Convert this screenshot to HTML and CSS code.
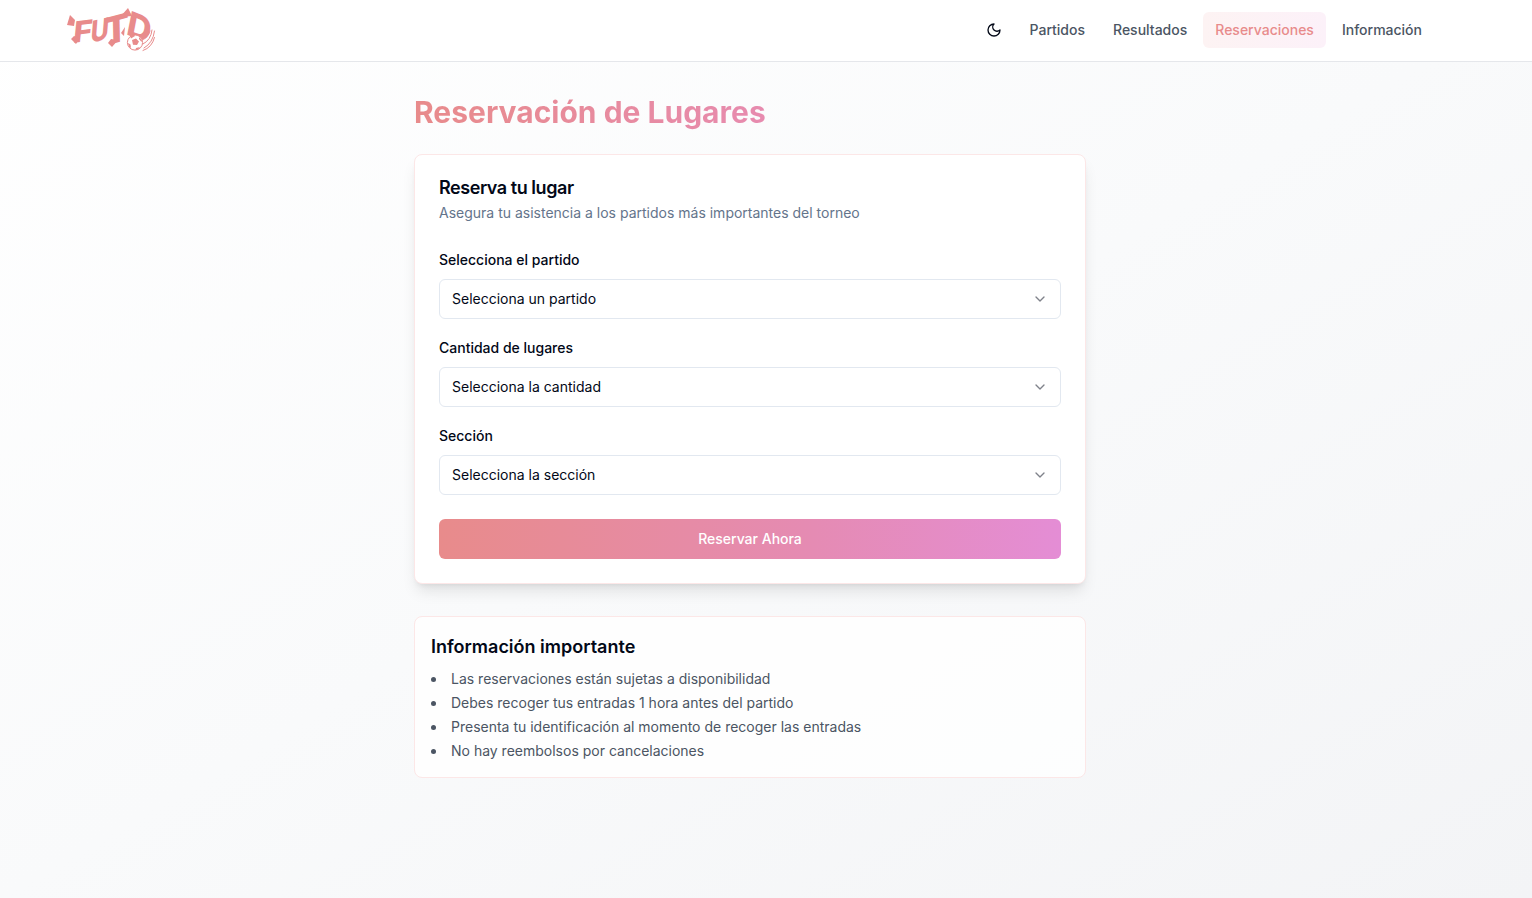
FILE: index.html
```html
<!DOCTYPE html>
<html lang="es">
<head>
<meta charset="utf-8">
<title>Reservación de Lugares</title>
<link rel="stylesheet" href="styles.css">
</head>
<body>
<header class="header">
  <div class="header-inner">
    <a class="brand" href="#" aria-label="FUTD">
      <svg class="logo" width="96" height="56" viewBox="62 2 96 56">
        <g class="logo-letters">
          <text transform="matrix(1.12 -.14 -.1 1.02 72.500 43)">F</text>
          <text transform="matrix(.86 -.2 -.08 1.04 90 43)">U</text>
          <text transform="matrix(1.3 -.34 .03 1.3 104 46)">T</text>
          <text transform="matrix(1.12 .44 -.22 1.12 125.500 34)">D</text>
        </g>
        <g class="brush">
          <path d="M67 25l3-10 5 5-1 6z"/>
          <path d="M71 39l3-3 6 2-4 6zM108 43l3-4 7 1-6 7z"/>
          <path d="M120 17l8-9 4 8zM124 36l-3-3 4-6z"/>
        </g>
        <g class="swoosh">
          <path d="M144 48q9-5 10.500-17M143 44q8-4 9-14M143 50.500q9-3 11.500-13M142 40q6-2 8-9"/>
        </g>
        <circle class="ball" cx="135" cy="42.500" r="7.600"/>
        <g class="brush">
          <path d="M132 40l4-1.500 3 3-2 3.500-4-.3zM130 36l4-1.500 1 1.500-4 2.500zM139 37l3 3-.5 2-2.500-3zM128 43l2.500 1.500.5 3.500-2-1zM136 48l4-1-2 2.500-2.500.5z"/>
        </g>
      </svg>
    </a>
    <nav class="nav">
      <button class="theme" aria-label="Tema">
        <svg class="icon" viewBox="0 0 24 24"><path d="M12 3a6 6 0 0 0 9 9 9 9 0 1 1-9-9Z"/></svg>
      </button>
      <a class="nav-link" href="#">Partidos</a>
      <a class="nav-link" href="#">Resultados</a>
      <a class="nav-link active" href="#">Reservaciones</a>
      <a class="nav-link" href="#">Información</a>
    </nav>
  </div>
</header>
<main class="main">
  <h1 class="title">Reservación de Lugares</h1>
  <section class="card">
    <h2 class="card-title">Reserva tu lugar</h2>
    <p class="card-desc">Asegura tu asistencia a los partidos más importantes del torneo</p>
    <div class="fields">
      <div class="field">
        <span class="label">Selecciona el partido</span>
        <button class="select"><span>Selecciona un partido</span><svg class="icon chevron" viewBox="0 0 24 24"><path d="m6 9 6 6 6-6"/></svg></button>
      </div>
      <div class="field">
        <span class="label">Cantidad de lugares</span>
        <button class="select"><span>Selecciona la cantidad</span><svg class="icon chevron" viewBox="0 0 24 24"><path d="m6 9 6 6 6-6"/></svg></button>
      </div>
      <div class="field">
        <span class="label">Sección</span>
        <button class="select"><span>Selecciona la sección</span><svg class="icon chevron" viewBox="0 0 24 24"><path d="m6 9 6 6 6-6"/></svg></button>
      </div>
    </div>
    <button class="submit">Reservar Ahora</button>
  </section>
  <section class="info">
    <h3 class="info-title">Información importante</h3>
    <ul class="info-list">
      <li>Las reservaciones están sujetas a disponibilidad</li>
      <li>Debes recoger tus entradas 1 hora antes del partido</li>
      <li>Presenta tu identificación al momento de recoger las entradas</li>
      <li>No hay reembolsos por cancelaciones</li>
    </ul>
  </section>
</main>
</body>
</html>
```
FILE: styles.css
```css
* { box-sizing: border-box; margin: 0; padding: 0; }
body {
  min-height: 100vh;
  font-family: Inter, sans-serif;
  font-size: 14px;
  line-height: 20px;
  color: #020817;
  background: linear-gradient(to bottom right, #fff, #f9fafb 50%, #f3f4f6);
}
button { font: inherit; color: inherit; background: none; border: 0; }
a { color: inherit; text-decoration: none; }
.icon { width: 16px; height: 16px; fill: none; stroke: currentColor; stroke-width: 2; stroke-linecap: round; stroke-linejoin: round; }
.header { height: 62px; background: #fff; border-bottom: 1px solid #e5e7eb; }
.header-inner { max-width: 1500px; height: 60px; padding: 0 66px 0 62px; display: flex; align-items: center; justify-content: space-between; }
.brand, .logo { display: block; }
.logo-letters { font: 800 29px Inter, sans-serif; fill: #e88b8b; }
.brush { fill: #e88b8b; }
.swoosh { fill: none; stroke: #e88b8b; stroke-width: 1; stroke-linecap: round; }
.ball { fill: #fff; stroke: #e88b8b; stroke-width: 1; }
.nav { display: flex; align-items: center; gap: 4px; }
.theme { width: 40px; height: 40px; display: flex; align-items: center; justify-content: center; }
.nav-link { padding: 8px 12px; border-radius: 6px; font-weight: 500; color: #4b5563; }
.active { color: #e88b8b; background: linear-gradient(to right, #fdf3f3, #fcf1f9); }
.main { width: 672px; margin-left: 414px; padding-top: 32px; }
.title {
  font-size: 30px; line-height: 36px; font-weight: 700; margin-bottom: 24px;
  background: linear-gradient(to right, #e88b8b, #e68bd0);
  -webkit-background-clip: text; background-clip: text; color: transparent;
}
.card { padding: 24px; background: #fff; border: 1px solid #fce7e7; border-radius: 8px; box-shadow: 0 10px 15px -3px rgba(0,0,0,.1), 0 4px 6px -4px rgba(0,0,0,.1); }
.card-title { font-size: 18px; line-height: 18px; font-weight: 600; letter-spacing: -.45px; }
.card-desc { margin: 6px 0 24px; color: #64748b; }
.fields { display: grid; gap: 16px; }
.field { display: grid; gap: 8px; }
.label { padding-top: 2px; line-height: 22px; font-weight: 500; }
.select { height: 40px; padding: 0 12px; border: 1px solid #e2e8f0; border-radius: 6px; display: flex; align-items: center; justify-content: space-between; }
.chevron { opacity: .5; }
.submit { width: 100%; height: 40px; margin-top: 24px; border-radius: 6px; color: #fff; font-weight: 500; background: linear-gradient(to right, #e88b8b, #e58bb3 60%, #e48dd5); }
.info { margin-top: 32px; padding: 16px; border: 1px solid #fce7e7; border-radius: 8px; background: rgba(255,255,255,.8); }
.info-title { font-size: 18px; line-height: 28px; font-weight: 600; margin-bottom: 8px; }
.info-list { display: grid; gap: 4px; list-style: disc inside; color: #4b5563; }
```
